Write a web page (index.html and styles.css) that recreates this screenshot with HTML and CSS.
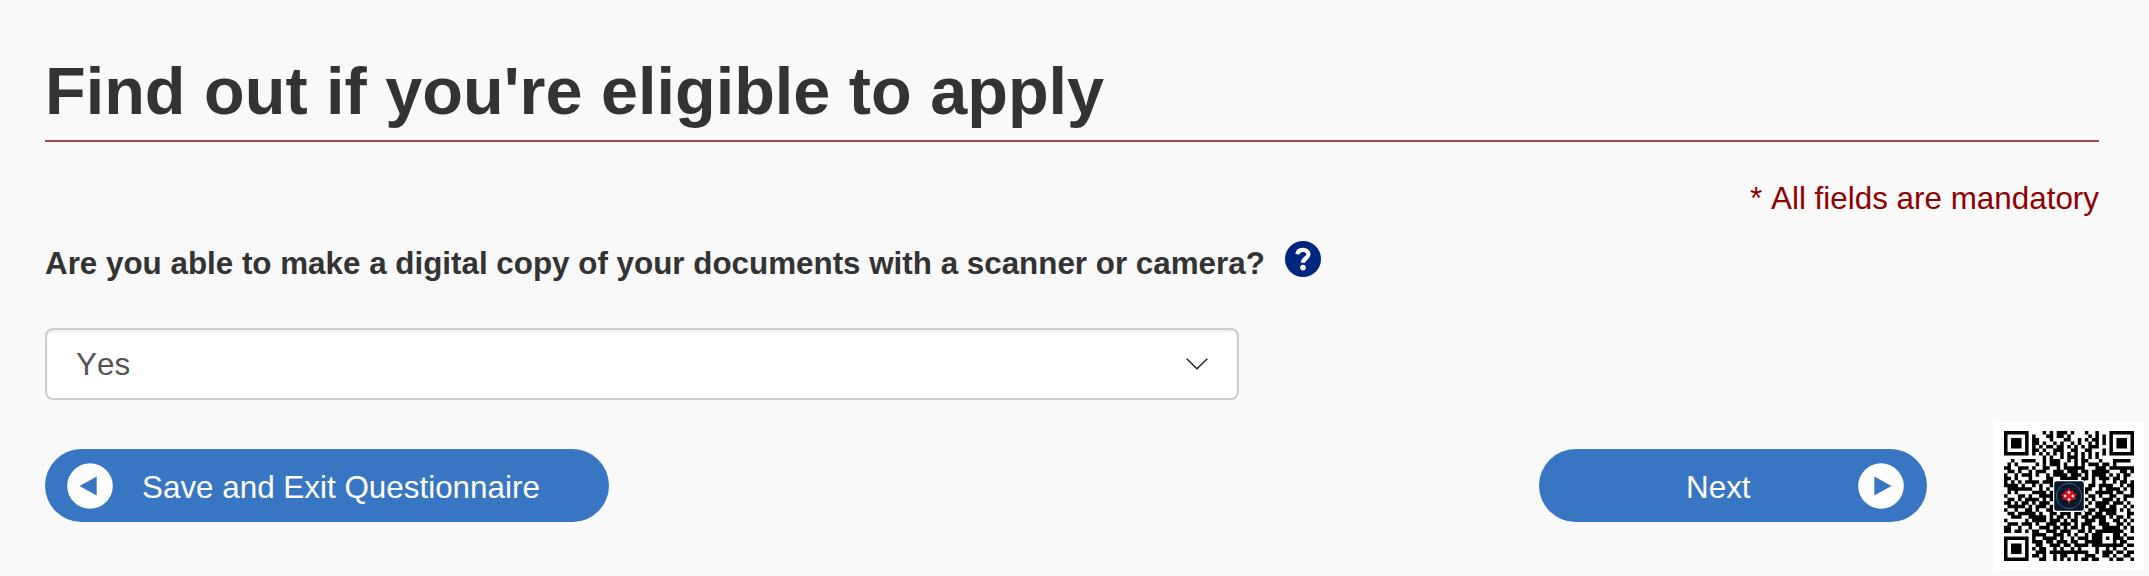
FILE: index.html
```html
<!DOCTYPE html>
<html lang="en">
<head>
    <meta charset="utf-8">
    <title>Find out if you're eligible to apply</title>
    <link rel="stylesheet" href="styles.css">
</head>
<body>
    <main class="container">
        <h1>Find out if you're eligible to apply</h1>
        <p class="mandatory">* All fields are mandatory</p>
        <form onsubmit="return false;">
            <div class="question">
                <label for="answer">Are you able to make a digital copy of your documents with a scanner or camera?</label>
                <svg class="help" viewBox="0 0 36 36">
                    <circle cx="18" cy="18" r="18" fill="#00267f"/>
                    <path d="M12.4 13.2C12.7 10.4 15 8.8 18 8.8C21 8.8 23.4 10.7 23.4 13.5C23.4 17.4 18 17.2 18 21.8" fill="none" stroke="#fff" stroke-width="4.2"/>
                    <circle cx="18" cy="26.6" r="2.8" fill="#fff"/>
                </svg>
            </div>
            <div class="select" id="answer">
                <span>Yes</span>
                <svg class="chevron" viewBox="0 0 22 12"><path d="M.7 .7L11 10.7L21.3 .7"/></svg>
            </div>
            <div class="buttons">
                <button type="button" class="save">
                    <svg class="arrow" viewBox="0 0 46 46"><circle cx="23" cy="23" r="22.8"/><path d="M12.5 23L29.7 13.5V32.5Z"/></svg>
                    <span>Save and Exit Questionnaire</span>
                </button>
                <button type="submit" class="next">
                    <span>Next</span>
                    <svg class="arrow" viewBox="0 0 46 46"><circle cx="23" cy="23" r="22.8"/><path d="M33.5 23L16.3 13.5V32.5Z"/></svg>
                </button>
            </div>
        </form>
    </main>

    <div class="qr">
        <svg viewBox="0 0 37 37"><path id="qr-modules"/></svg>
        <svg class="badge" viewBox="0 0 32 32">
            <rect width="32" height="32" rx="3" fill="#fff"/>
            <rect x="1.2" y="1.2" width="29.6" height="29.6" rx="2.5" fill="#07192f"/>
            <circle cx="16" cy="16" r="12.5" fill="none" stroke="#71849a" stroke-width="1" stroke-dasharray="1.2 .5"/>
            <path d="M16 8L18 11L20 10L20 13L24 14L22 17L23 19L18 20L16 24L14 20L9 19L10 17L8 14L12 13L12 10L14 11Z" fill="#e40d18"/>
            <g fill="#fff"><circle cx="16" cy="12.5" r="1.3"/><circle cx="12.2" cy="16" r="1.3"/><circle cx="19.8" cy="16" r="1.3"/><circle cx="16" cy="19.5" r="1.3"/></g>
        </svg>
    </div>
    <script src="qr.js"></script>
</body>
</html>
```
FILE: styles.css
```css
body{
    margin: 0;
    height: 576px;
    overflow: hidden;
    background-color: #f9f9f9;
    color: #333;
    font-family: "Liberation Sans", Arial, sans-serif;
    font-size: 31.4px;
}
.container{
    padding: 55px 50px 0 45px;
}
h1{
    margin: 0;
    height: 85px;
    border-bottom: 2px solid #a04444;
    font-size: 66.6px;
    line-height: 73px;
    white-space: nowrap;
}
.mandatory{
    margin: 39px 0 0;
    line-height: 36px;
    text-align: right;
    color: #900000;
    font-kerning: none;
}
.question{
    display: flex;
    align-items: flex-start;
    gap: 20px;
    margin-top: 24px;
    height: 87px;
}
.question label{
    padding-top: 5px;
    font-size: 31.36px;
    font-weight: bold;
    line-height: 36px;
}
.help{
    width: 36px;
    height: 36px;
}
.select{
    display: flex;
    align-items: center;
    justify-content: space-between;
    box-sizing: border-box;
    width: 1194px;
    height: 72px;
    padding: 0 29px 0 29px;
    border: 2px solid #ccc;
    border-radius: 8px;
    background-color: #fff;
    box-shadow: inset 0 2px 3px rgba(0, 0, 0, 0.07);
    color: #555;
    font-kerning: none;
}
.select span{
    padding-top: 2px;
}
.chevron{
    width: 22px;
    height: 12px;
    fill: none;
    stroke: #222;
    stroke-width: 1.5;
}
.buttons{
    display: flex;
    justify-content: space-between;
    margin-top: 49px;
    padding-right: 172px;
}
button{
    display: flex;
    align-items: center;
    height: 73px;
    border: none;
    border-radius: 37px;
    background-color: #3876c4;
    color: #fff;
    font-family: inherit;
    font-size: inherit;
}
button span{
    padding-top: 4px;
}
.save{
    width: 564px;
    padding: 0 0 0 22px;
    gap: 29px;
}
.next{
    width: 388px;
    padding: 0 23px 0 147px;
    justify-content: space-between;
}
.arrow{
    width: 46px;
    height: 46px;
    fill: #fff;
}
.arrow path{
    fill: #3876c4;
}
.qr{
    position: absolute;
    right: 5px;
    bottom: 5px;
    display: grid;
    place-items: center;
    box-sizing: border-box;
    width: 151px;
    height: 150px;
    background-color: #fff;
}
.qr svg{
    grid-area: 1 / 1;
    width: 130px;
    height: 130px;
}
.qr .badge{
    width: 32px;
    height: 32px;
}
```
FILE: qr.js
```js
const rows = [
    '1111111000010101110100010010001111111',
    '1000001010001101101000001010101000001',
    '1011101011000100011001010110101011101',
    '1011101011010010100101001010101011101',
    '1011101010101101101010101110001011101',
    '1000001011010011100110011000101000001',
    '1111111010101010101010101010101111111',
    '0000000000010100101110101010000000000',
    '0010011110010111001010110001000111110',
    '0101000001010111010010101110110100000',
    '1100111010011001011111100011101111111',
    '0110100101110011101110110111110001101',
    '1001011101001011110111010111101010110',
    '1101000100001100111110110101110110100',
    '1010101111011100000000100100100101101',
    '1111010010100100000000101101111001011',
    '0111111100101000000000011001011110101',
    '0101000011110100000000110011111011001',
    '1000110100111100000000001101001100111',
    '0110101111010100000000110100111010100',
    '1101011010111000000000101011110111010',
    '0111110101110100000000010011101100101',
    '1001001101001100000000101101111101010',
    '0110111110100110111011011011011100011',
    '0011100111110101101010110111101011010',
    '1000001011110111010110011101100110101',
    '0111011101001110111010111001110011010',
    '1100100100111011010110101100111110101',
    '1101101011001110111001101011111111001',
    '0000000011110011101010010111000110100',
    '1111111010011110100101110111010111011',
    '1000001011101101110110011111000101100',
    '1011101001100111011011110111111111011',
    '1011101010110010100101000010010100100',
    '1011101001110111111111110010111011011',
    '1000001011010010110010011100110100110',
    '1111111000110010101010110110001011001'
];

// horizontal runs of dark modules, one subpath each
let d = '';
rows.forEach((row, y) => {
    for (const run of row.matchAll(/1+/g)) {
        const w = run[0].length;
        d += `M${run.index} ${y}h${w}v1h-${w}z`;
    }
});
document.getElementById('qr-modules').setAttribute('d', d);
```
